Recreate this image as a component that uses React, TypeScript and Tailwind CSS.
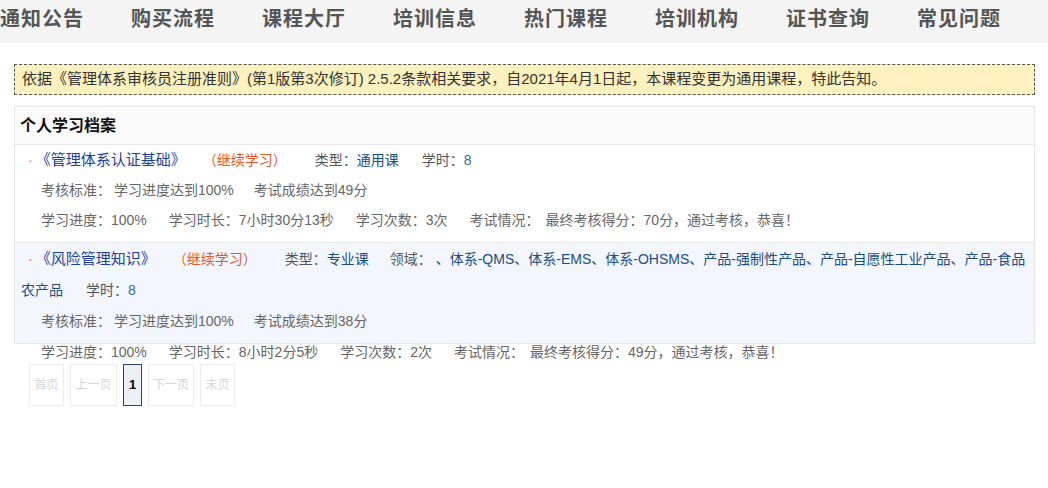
const navItems = ["通知公告", "购买流程", "课程大厅", "培训信息", "热门课程", "培训机构", "证书查询", "常见问题"];

const cjk = "font-['Liberation_Sans','Noto_Sans_CJK_SC',sans-serif]";

type Course = {
  title: string;
  type: string;
  domain?: string;
  hours: string;
  pass: string;
  progress: string;
  duration: string;
  times: string;
  score: string;
};

const courses: Course[] = [
  {
    title: "《管理体系认证基础》",
    type: "通用课",
    hours: "8",
    pass: "49",
    progress: "100%",
    duration: "7小时30分13秒",
    times: "3次",
    score: "70",
  },
  {
    title: "《风险管理知识》",
    type: "专业课",
    domain: "、体系-QMS、体系-EMS、体系-OHSMS、产品-强制性产品、产品-自愿性工业产品、产品-食品农产品",
    hours: "8",
    pass: "38",
    progress: "100%",
    duration: "8小时2分5秒",
    times: "2次",
    score: "49",
  },
];

function CourseItem({ course, index }: { course: Course; index: number }) {
  const alt = index % 2 === 1;
  return (
    <div
      className={`${alt ? "h-[101px] bg-[#f3f7fd] leading-[31px]" : "h-[98px] bg-white leading-[30px]"} border-b border-[#e6e6e6] px-[6px] text-[14px] text-[#666]`}
    >
      <div>
        <span className="ml-[7px] mr-[3px] text-[#f26b1d]">·</span>
        <span className="text-[15px] text-[#1d3fa0]">{course.title}</span>
        <span className="ml-[17px] text-[#e4572a]">（继续学习）</span>
        <span className="ml-[28px] text-[#555]">类型：</span>
        <span className="text-[#1c4d80]">{course.type}</span>
        {course.domain && (
          <>
            <span className="ml-[21px] text-[#555]">领域：</span>
            <span className="ml-[4px] text-[#1c4d80]">{course.domain}</span>
          </>
        )}
        <span className="ml-[23px] text-[#555]">学时：</span>
        <span className="text-[#3d6aa0]">{course.hours}</span>
      </div>
      <div className="pl-[20px]">
        <span>考核标准：</span>
        <span className="ml-[3px]">学习进度达到100%</span>
        <span className="ml-[20px]">考试成绩达到{course.pass}分</span>
      </div>
      <div className="pl-[20px]">
        <span>学习进度：{course.progress}</span>
        <span className="ml-[22px]">学习时长：{course.duration}</span>
        <span className="ml-[22px]">学习次数：{course.times}</span>
        <span className="ml-[22px]">考试情况：</span>
        <span className="ml-[6px]">最终考核得分：{course.score}分，通过考核，恭喜！</span>
      </div>
    </div>
  );
}

export default function App() {
  return (
    <div className={`min-h-[488px] w-[1048px] bg-white ${cjk} [text-spacing-trim:space-all]`}>
      <nav className="flex h-[43px] items-center bg-[#f4f4f4] pb-[7px]">
        {navItems.map((item) => (
          <div
            key={item}
            className="w-[131px] shrink-0 font-['Noto_Sans_CJK_SC',serif] text-[20px] font-bold tracking-[1px] text-[#555]"
          >
            {item}
          </div>
        ))}
      </nav>

      <div className="pl-[14px] pr-[13px]">
        <div className="mt-[21px] flex h-[31px] items-center border border-dashed border-[#555] bg-[#fdf1bf] px-[7px] text-[15px] text-[#333]">
          依据《管理体系审核员注册准则》(第1版第3次修订) 2.5.2条款相关要求，自2021年4月1日起，本课程变更为通用课程，特此告知。
        </div>

        <div className="mt-[11px] border border-[#e6e6e6] border-b-0">
          <div className="flex h-[38px] items-center border-b border-[#e6e6e6] bg-[#fafafa] px-[5px] text-[16px] font-bold text-[#111]">
            个人学习档案
          </div>
          {courses.map((c, i) => (
            <CourseItem key={c.title} course={c} index={i} />
          ))}
        </div>

        <div className="ml-[15px] mt-[20px] flex gap-[6px] text-[12px]">
          <span className="flex h-[42px] w-[35px] items-center justify-center border border-[#ececec] text-[#d6d6d6]">首页</span>
          <span className="flex h-[42px] w-[47px] items-center justify-center border border-[#ececec] text-[#d6d6d6]">上一页</span>
          <span className="flex h-[42px] w-[19px] items-center justify-center border border-[#2b4562] bg-[#edf1f6] text-[13px] font-bold text-black">1</span>
          <span className="flex h-[42px] w-[46px] items-center justify-center border border-[#ececec] text-[#d6d6d6]">下一页</span>
          <span className="flex h-[42px] w-[35px] items-center justify-center border border-[#ececec] text-[#d6d6d6]">末页</span>
        </div>
      </div>
    </div>
  );
}
